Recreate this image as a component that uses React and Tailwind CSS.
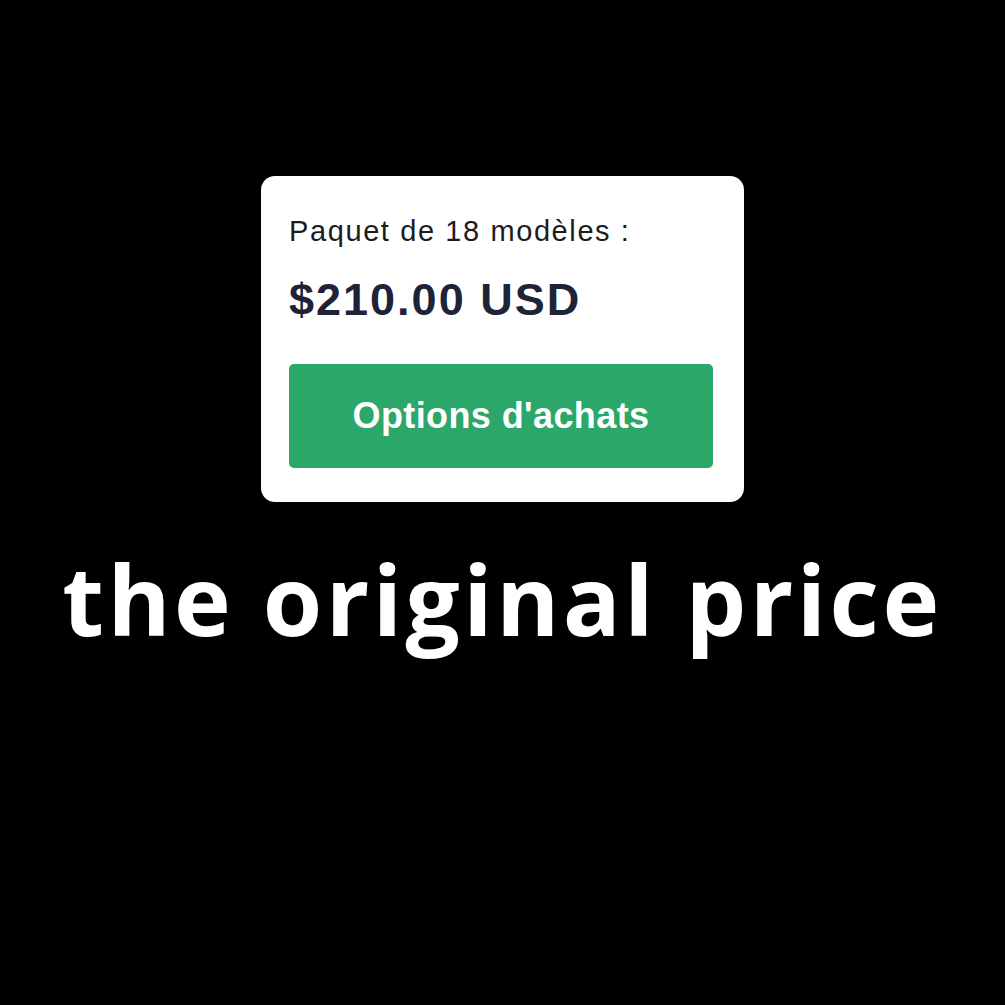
import React from 'react';

const App = () => {
    return (
        <div className="min-h-screen w-full bg-black flex flex-col items-center pt-[176px]">
            {/* Price card */}
            <div className="w-[483px] h-[326px] bg-white rounded-[14px] pt-[37px] pl-[28px] pr-[31px] flex flex-col">
                <p className="font-['Liberation_Sans',Arial,sans-serif] text-[29px] leading-[36px] tracking-[1.6px] text-[#1c1c1c]">
                    Paquet de 18 modèles :
                </p>
                <p className="mt-[25px] font-['Liberation_Sans',Arial,sans-serif] font-bold text-[45px] leading-[52px] tracking-[2px] text-[#1f2338]">
                    $210.00 USD
                </p>
                <button className="mt-[38px] h-[104px] w-full rounded-[5px] bg-[#2aa769] flex items-center justify-center">
                    <span className="font-['Liberation_Sans',Arial,sans-serif] font-bold text-[36px] leading-[36px] tracking-[0.4px] text-white">
                        Options d'achats
                    </span>
                </button>
            </div>

            {/* Caption */}
            <h1 className="mt-[49px] font-['Open_Sans',sans-serif] font-bold text-[96px] leading-[96px] tracking-[3.5px] text-white">
                the original price
            </h1>
        </div>
    );
};

export default App;
